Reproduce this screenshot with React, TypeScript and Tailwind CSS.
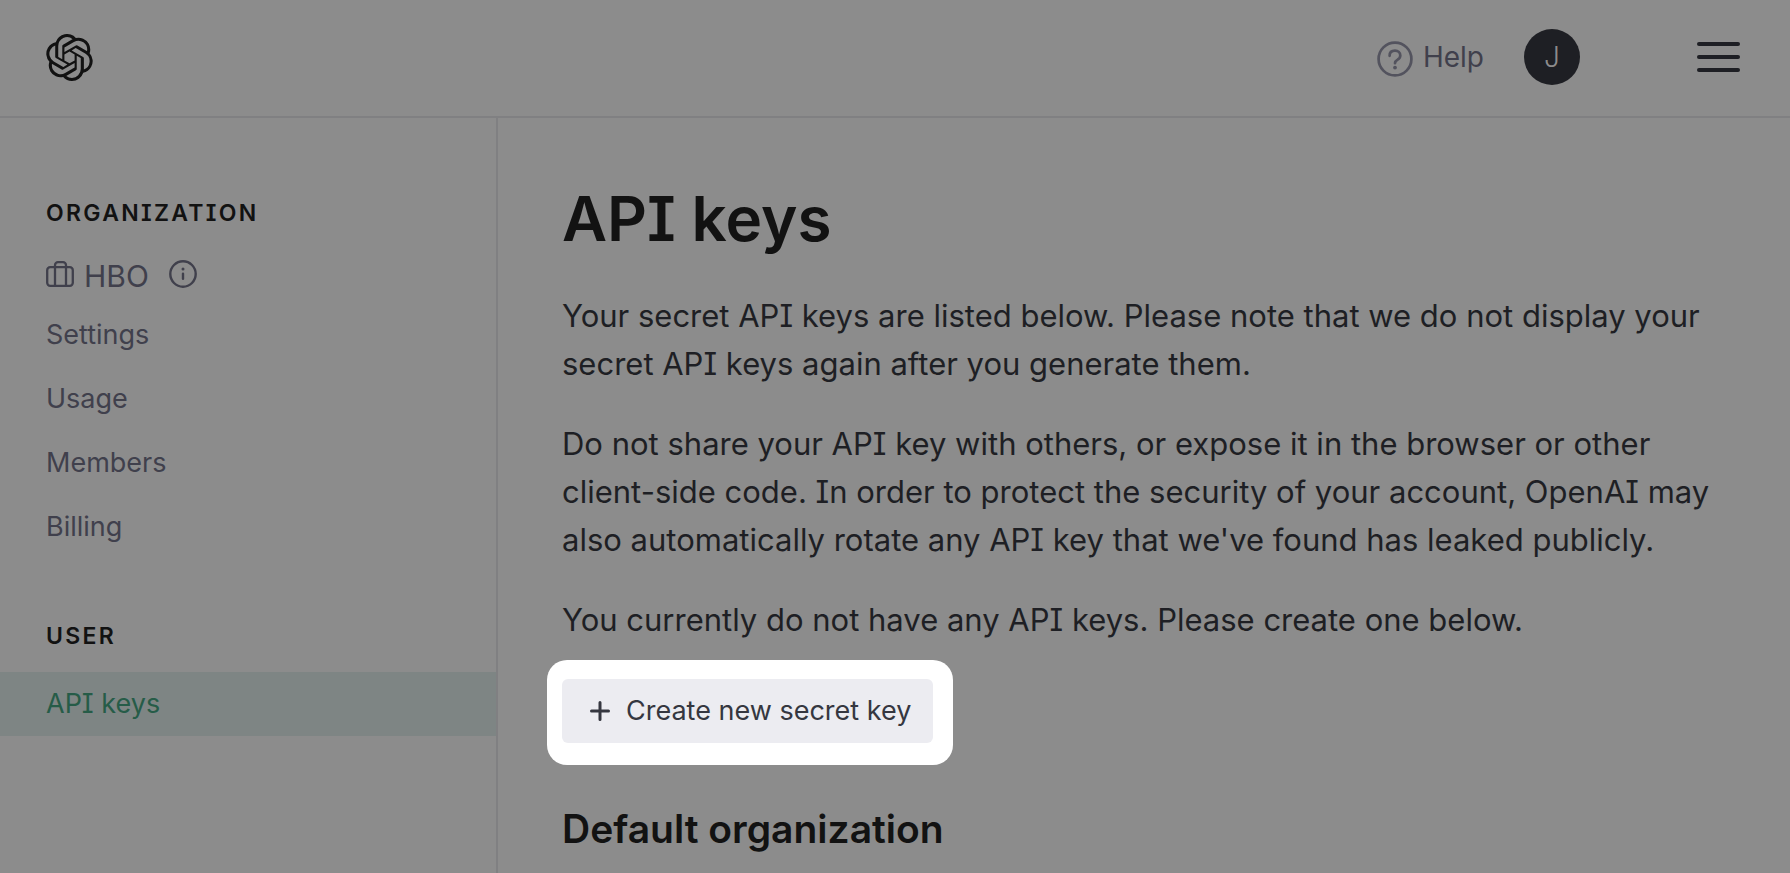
import React from "react";
import { SiOpenai } from "react-icons/si";

const organizationLinks = ["Settings", "Usage", "Members", "Billing"];

function BriefcaseIcon() {
  return (
    <svg width="28" height="26" viewBox="0 0 28 26" fill="none" stroke="currentColor" strokeWidth="2.3" aria-hidden="true">
      <rect x="1.2" y="6.2" width="25.6" height="18.6" rx="3" />
      <path d="M9 25V4.2a3 3 0 0 1 3-3h5a3 3 0 0 1 3 3V25" />
    </svg>
  );
}

function InfoIcon() {
  return (
    <svg width="28" height="28" viewBox="0 0 28 28" fill="none" stroke="currentColor" strokeWidth="2.4" strokeLinecap="round" aria-hidden="true">
      <circle cx="14" cy="14" r="12.7" />
      <path d="M14 13.8v5" />
      <circle cx="14" cy="9" r="1.5" fill="currentColor" stroke="none" />
    </svg>
  );
}

function HelpIcon() {
  return (
    <svg width="36" height="36" viewBox="0 0 36 36" fill="none" stroke="currentColor" strokeWidth="2.7" strokeLinecap="round" aria-hidden="true">
      <circle cx="18" cy="18" r="16.4" />
      <path d="M12.6 14.8c0-3.2 2.2-5.1 5.4-5.1 3.1 0 5.3 1.9 5.3 4.7 0 2-1 3.2-2.7 4.3-1.8 1.1-2.6 1.9-2.6 3.5" />
      <circle cx="18" cy="26.6" r="1.9" fill="currentColor" stroke="none" />
    </svg>
  );
}

function Header() {
  return (
    <header className="flex h-[118px] items-center border-b-2 border-[#808082] pr-[50px] pb-0.5 pl-[46px]">
      <a href="#home" aria-label="Home" className="text-[#121212]">
        <SiOpenai size={47} />
      </a>
      <div className="ml-auto flex items-center">
        <a href="#help" className="flex items-center gap-2.5 text-[28px] text-[#40404c]">
          <span className="pt-1 text-[#53535e]">
            <HelpIcon />
          </span>
          Help
        </a>
        <button className="ml-10 flex size-14 items-center justify-center rounded-full bg-[#1e1f24] text-[28px] font-light text-[#8c8c8c]">
          J
        </button>
        <button aria-label="Menu" className="ml-[117px] flex w-[43px] flex-col gap-[9px]">
          <span className="h-1 w-full rounded-full bg-[#1e1f24]" />
          <span className="h-1 w-full rounded-full bg-[#1e1f24]" />
          <span className="h-1 w-full rounded-full bg-[#1e1f24]" />
        </button>
      </div>
    </header>
  );
}

function Sidebar() {
  return (
    <nav className="w-[498px] shrink-0 border-r-2 border-[#808082] pt-[79px] text-[27px] text-[#40404c]">
      <h2 className="px-[46px] text-[23px] leading-8 font-semibold tracking-widest text-[#121212]">ORGANIZATION</h2>
      <div className="mt-5 flex h-[54px] items-center px-[46px] text-[30px]">
        <span className="pb-1">
          <BriefcaseIcon />
        </span>
        <span className="ml-2.5">HBO</span>
        <button aria-label="Organization details" className="ml-5 pb-1">
          <InfoIcon />
        </button>
      </div>
      <ul>
        {organizationLinks.map((label) => (
          <li key={label}>
            <a href={"#" + label.toLowerCase()} className="flex h-16 items-center px-[46px]">
              {label}
            </a>
          </li>
        ))}
      </ul>
      <h2 className="mt-[61px] mb-5 px-[46px] text-[23px] leading-8 font-semibold tracking-widest text-[#121212]">USER</h2>
      <a href="#api-keys" aria-current="page" className="flex h-16 items-center bg-[#7e8584] px-[46px] text-[#265c48]">
        API keys
      </a>
    </nav>
  );
}

export default function App() {
  return (
    <div
      className="flex min-h-screen flex-col bg-[#8c8c8c] [font-feature-settings:'cv08']"
      style={{ fontFamily: 'Inter, "Liberation Sans", sans-serif' }}
    >
      <Header />
      <div className="flex grow">
        <Sidebar />
        <main className="min-w-0 grow px-16 pt-16 text-[31px] leading-[48px] text-[#1e1f24]">
          <h1 className="mb-9 text-[62px] leading-[74px] font-semibold text-[#121212]">API keys</h1>
          <div className="flex flex-col gap-8">
            <p>
              Your secret API keys are listed below. Please note that we do not display your secret API keys again after
              you generate them.
            </p>
            <p>
              Do not share your API key with others, or expose it in the browser or other client-side code. In order to
              protect the security of your account, OpenAI may also automatically rotate any API key that we've found
              has leaked publicly.
            </p>
            <p>You currently do not have any API keys. Please create one below.</p>
          </div>
          <div className="mt-4 -ml-[15px] w-fit rounded-[20px] bg-white pt-[19px] pr-5 pb-[22px] pl-[15px]">
            <button className="flex h-16 items-center gap-4 rounded-md bg-[#ececf1] pr-[22px] pl-7 text-[27px] text-[#353740]">
              <svg width="20" height="20" viewBox="0 0 20 20" stroke="currentColor" strokeWidth="3" strokeLinecap="round" aria-hidden="true">
                <path d="M10 1.5v17M1.5 10h17" />
              </svg>
              Create new secret key
            </button>
          </div>
          <h2 className="mt-10 text-[39px] font-semibold text-[#121212]">Default organization</h2>
        </main>
      </div>
    </div>
  );
}
